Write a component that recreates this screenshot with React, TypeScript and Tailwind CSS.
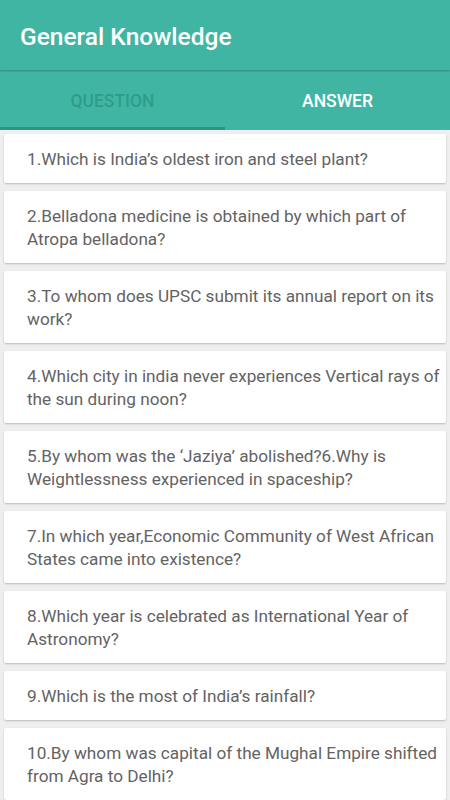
import React, { useState } from "react";

const questions = [
  "1.Which is India\u2019s oldest iron and steel plant?",
  "2.Belladona medicine is obtained by which part of Atropa belladona?",
  "3.To whom does UPSC submit its annual report on its work?",
  "4.Which city in india never experiences Vertical rays of the sun during noon?",
  "5.By whom was the \u2018Jaziya\u2019 abolished?6.Why is Weightlessness experienced in spaceship?",
  "7.In which year,Economic Community of West African States came into existence?",
  "8.Which year is celebrated as International Year of Astronomy?",
  "9.Which is the most of India\u2019s rainfall?",
  "10.By whom was capital of the Mughal Empire shifted from Agra to Delhi?",
];

export default function App() {
  const [tab, setTab] = useState("question");

  return (
    <div className="h-[800px] overflow-hidden bg-[#efefef] font-['Roboto',sans-serif]">
      {/* Toolbar */}
      <div className="h-[70px] bg-[#41b5a4] flex items-center px-5 pt-[4px] shadow-[0_1px_2px_rgba(0,0,0,0.25)] relative z-10">
        <h1 className="text-white text-[24.5px] font-medium">General Knowledge</h1>
      </div>
      {/* Tabs */}
      <div className="h-[60px] bg-[#41b5a4] flex">
        <button
          onClick={() => setTab("question")}
          className={`flex-1 flex items-center justify-center pt-[3px] text-[17.5px] font-medium relative ${tab === "question" ? "text-[#2f9c8b]" : "text-white"}`}
        >
          QUESTION
          {tab === "question" && <span className="absolute left-0 right-0 bottom-0 h-[3px] bg-[#2a9786]" />}
        </button>
        <button
          onClick={() => setTab("answer")}
          className={`flex-1 flex items-center justify-center pt-[3px] text-[17.5px] font-medium relative ${tab === "answer" ? "text-[#2f9c8b]" : "text-white"}`}
        >
          ANSWER
          {tab === "answer" && <span className="absolute left-0 right-0 bottom-0 h-[3px] bg-[#2a9786]" />}
        </button>
      </div>
      {/* List */}
      <div className="flex flex-col gap-[8px] px-[4px] pt-[4px]">
        {questions.map((q) => (
          <div
            key={q}
            className="bg-white rounded-[2px] shadow-[0_1px_2px_rgba(0,0,0,0.22)] pl-[23px] pr-0 pt-[14px] pb-[12px] text-[17.2px] leading-[23px] text-[#636363]"
          >
            {q}
          </div>
        ))}
      </div>
    </div>
  );
}
